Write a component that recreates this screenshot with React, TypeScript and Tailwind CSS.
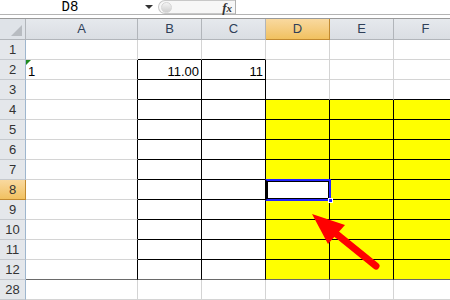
const COLS = ["A", "B", "C", "D", "E", "F"];
const WIDTHS = ["w-[112px]", "w-[64px]", "w-[64px]", "w-[64px]", "w-[64px]", "w-[64px]"];
const ROWS = [1, 2, 3, 4, 5, 6, 7, 8, 9, 10, 11, 12, 28];

function bordered(r: number, c: number) {
  // c: 1 = A ... 6 = F
  if (r >= 2 && r <= 12 && (c === 2 || c === 3)) return true;
  if (r >= 4 && r <= 12 && c >= 4 && c <= 6) return true;
  return false;
}

function nextRow(r: number) {
  return r === 12 ? 28 : r + 1;
}

function Cell({ r, c }: { r: number; c: number }) {
  const right = bordered(r, c) || bordered(r, c + 1);
  const bottom = r !== 12 && (bordered(r, c) || bordered(nextRow(r), c));
  const yellow = r >= 4 && r <= 12 && c >= 4 && !(r === 8 && c === 4);

  let content: React.ReactNode = null;
  if (r === 2 && c === 1) {
    content = (
      <>
        <div className="absolute left-0 top-0 w-0 h-0 border-t-[5px] border-t-[#1e8a1e] border-r-[5px] border-r-transparent" />
        <span className="pl-[2px]">1</span>
      </>
    );
  } else if (r === 2 && c === 2) {
    content = <span className="ml-auto pr-[2px]">11.00</span>;
  } else if (r === 2 && c === 3) {
    content = <span className="ml-auto pr-[2px]">11</span>;
  }

  return (
    <div
      className={`relative shrink-0 ${WIDTHS[c - 1]} h-full flex items-end pb-[1px] border-r border-b text-[13px] leading-none text-black ${
        yellow ? "bg-[#ffff00]" : "bg-white"
      } ${right ? "border-r-black" : "border-r-[#d4d4d4]"} ${
        r === 12 ? "border-b-[#6a6a6a]" : bottom ? "border-b-black" : "border-b-[#d4d4d4]"
      }`}
    >
      {content}
    </div>
  );
}

export default function App() {
  return (
    <div
      className="relative w-[450px] h-[300px] overflow-hidden bg-white"
      style={{ fontFamily: '"Liberation Sans", Arial, sans-serif' }}
    >
      {/* Formula bar */}
      <div className="flex h-[14px] bg-white">
        <div
          className="w-[140px] text-center text-[14px] leading-[14px] text-black"
          style={{ fontFamily: '"Liberation Mono", monospace' }}
        >
          D8
        </div>
        <div className="w-[18px] flex items-center justify-center">
          <div className="w-0 h-0 border-l-[4px] border-r-[4px] border-t-[4px] border-l-transparent border-r-transparent border-t-[#333]" />
        </div>
        <div className="w-[78px] flex items-center border-r border-[#b0b0b0]">
          <div className="relative h-[14px] w-full rounded-l-full border-l border-t border-b border-[#c8c8c8] bg-[#f7f7f7] flex items-center justify-end pr-[3px]">
            <div className="absolute left-[2px] top-[1px] w-[11px] h-[11px] rounded-full bg-gradient-to-b from-[#f4f4f4] to-[#cfcfcf] border border-[#d6d6d6]" />
            <span
              className="italic font-bold text-[13px] leading-none text-[#333]"
              style={{ fontFamily: '"Liberation Serif", serif' }}
            >
              f<span className="text-[11px]">x</span>
            </span>
          </div>
        </div>
        <div className="flex-1 bg-white" />
      </div>
      <div className="h-px bg-[#b4b4b4]" />
      <div className="h-[3px] bg-white" />
      <div className="h-px bg-[#9a9a9a]" />

      {/* Column headers */}
      <div className="flex h-[21px]">
        <div className="relative w-[26px] shrink-0 h-full bg-[#dfe3e8] border-r border-b border-[#b1b5ba]">
          <div className="absolute right-[3px] bottom-[3px] w-0 h-0 border-l-[11px] border-l-transparent border-b-[11px] border-b-[#b8bcc1]" />
        </div>
        {COLS.map((col, i) =>
          col === "D" ? (
            <div
              key={col}
              className={`${WIDTHS[i]} shrink-0 h-full flex items-center justify-center text-[13px] text-[#2f3f58] bg-gradient-to-b from-[#f9d99f] to-[#f1c15f] border-r border-b border-[#c28a30]`}
            >
              {col}
            </div>
          ) : (
            <div
              key={col}
              className={`${WIDTHS[i]} shrink-0 h-full flex items-center justify-center text-[13px] text-[#2f3f58] bg-gradient-to-b from-[#e6e9ed] to-[#dadee3] border-r border-b border-[#b1b5ba]`}
            >
              {col}
            </div>
          )
        )}
      </div>

      {/* Rows */}
      {ROWS.map((r) => (
        <div key={r} className="flex h-[20px]">
          <div
            className={`w-[26px] shrink-0 h-full flex items-center justify-center text-[13px] text-[#333] border-r border-b ${
              r === 8
                ? "bg-gradient-to-b from-[#f9d99f] to-[#f1c15f] border-r-[#c28a30] border-b-[#c28a30]"
                : "bg-[#e4e7eb] border-r-[#9eb6ce] border-b-[#c5c9ce]"
            } ${r === 12 ? "border-b-[#6a6a6a]" : ""}`}
          >
            {r}
          </div>
          {COLS.map((_, i) => (
            <Cell key={i} r={r} c={i + 1} />
          ))}
        </div>
      ))}

      {/* Active cell D8 */}
      <div className="absolute left-[265px] top-[179px] w-[66px] h-[22px] border-2 border-[#2323ff] border-l-black pointer-events-none">
        <div className="w-full h-full border border-black" />
        <div className="absolute -right-[4px] -bottom-[4px] w-[5px] h-[5px] bg-[#2323ff] border border-white" />
      </div>

      {/* Red arrow */}
      <svg className="absolute left-0 top-0 pointer-events-none" width="450" height="300" viewBox="0 0 450 300">
        <line x1="376" y1="266" x2="334" y2="232" stroke="#ff0000" strokeWidth="7" strokeLinecap="round" />
        <polygon points="312,214 345,225 328,244" fill="#ff0000" />
      </svg>
    </div>
  );
}
